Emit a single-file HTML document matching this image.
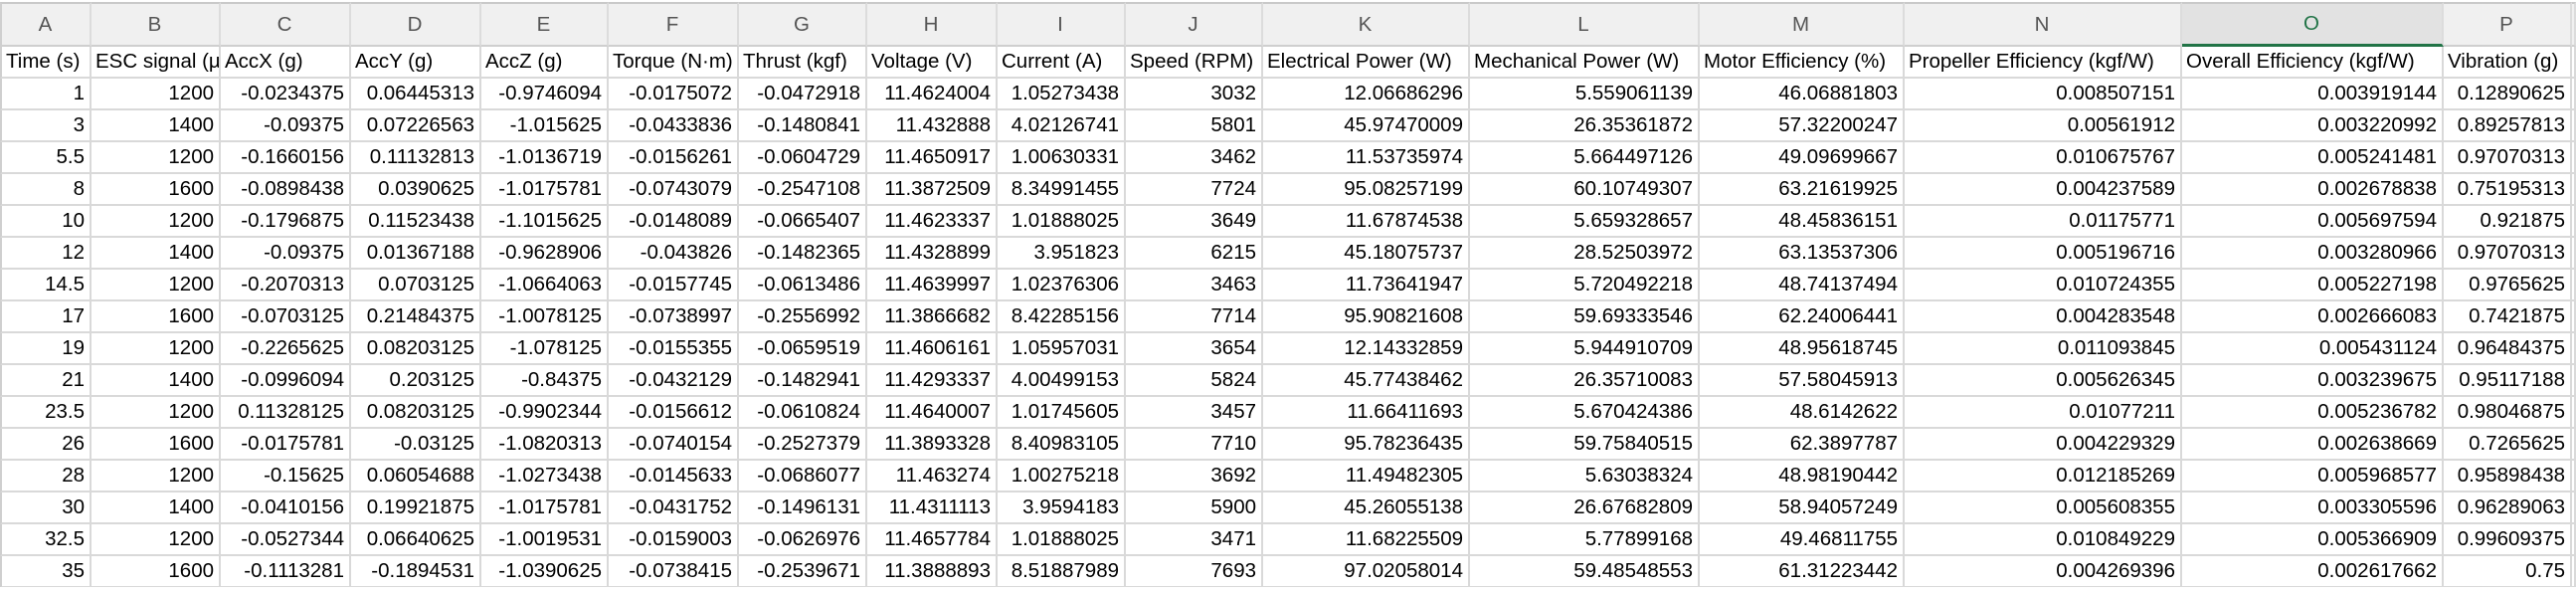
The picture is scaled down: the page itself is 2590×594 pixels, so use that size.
<!DOCTYPE html>
<html><head><meta charset="utf-8"><style>
html,body{margin:0;padding:0;background:#fff;width:2590px;height:594px;overflow:hidden}
#wrap{position:relative;width:2590px;height:594px;overflow:hidden}
table{position:absolute;left:0;top:2px;border-collapse:separate;border-spacing:0;table-layout:fixed;width:2590px;font-family:"Liberation Sans",sans-serif;font-size:20.5px;color:#000}
td{box-sizing:border-box;border-right:2px solid #d9d9d9;border-bottom:2px solid #d9d9d9;height:32px;padding:0 5px 0 4px;white-space:nowrap;overflow:hidden;text-align:right;line-height:30px}
tr.h td{background:#f0f0f0;color:#555;text-align:center;height:45px;border-top:2px solid #c9c9c9;border-right:2px solid #dcdcdc;border-bottom:2px solid #cfcfcf}
tr.h td.sel{background:#e2e2e2;color:#217346;border-bottom:3px solid #217346}
tr.t td{text-align:left;text-overflow:clip}
td:first-child{border-left:2px solid #cfcfcf}
</style></head><body><div id="wrap">
<table>
<colgroup><col style="width:92px"><col style="width:130px"><col style="width:131px"><col style="width:131px"><col style="width:128px"><col style="width:131px"><col style="width:129px"><col style="width:131px"><col style="width:129px"><col style="width:138px"><col style="width:208px"><col style="width:231px"><col style="width:206px"><col style="width:279px"><col style="width:263px"><col style="width:129px"><col style="width:4px"></colgroup>
<tr class="h"><td>A</td><td>B</td><td>C</td><td>D</td><td>E</td><td>F</td><td>G</td><td>H</td><td>I</td><td>J</td><td>K</td><td>L</td><td>M</td><td>N</td><td class="sel">O</td><td>P</td><td></td></tr>
<tr class="t"><td>Time (s)</td><td>ESC signal (µs)</td><td>AccX (g)</td><td>AccY (g)</td><td>AccZ (g)</td><td>Torque (N·m)</td><td>Thrust (kgf)</td><td>Voltage (V)</td><td>Current (A)</td><td>Speed (RPM)</td><td>Electrical Power (W)</td><td>Mechanical Power (W)</td><td>Motor Efficiency (%)</td><td>Propeller Efficiency (kgf/W)</td><td>Overall Efficiency (kgf/W)</td><td>Vibration (g)</td><td></td></tr>
<tr><td>1</td><td>1200</td><td>-0.0234375</td><td>0.06445313</td><td>-0.9746094</td><td>-0.0175072</td><td>-0.0472918</td><td>11.4624004</td><td>1.05273438</td><td>3032</td><td>12.06686296</td><td>5.559061139</td><td>46.06881803</td><td>0.008507151</td><td>0.003919144</td><td>0.12890625</td><td></td></tr>
<tr><td>3</td><td>1400</td><td>-0.09375</td><td>0.07226563</td><td>-1.015625</td><td>-0.0433836</td><td>-0.1480841</td><td>11.432888</td><td>4.02126741</td><td>5801</td><td>45.97470009</td><td>26.35361872</td><td>57.32200247</td><td>0.00561912</td><td>0.003220992</td><td>0.89257813</td><td></td></tr>
<tr><td>5.5</td><td>1200</td><td>-0.1660156</td><td>0.11132813</td><td>-1.0136719</td><td>-0.0156261</td><td>-0.0604729</td><td>11.4650917</td><td>1.00630331</td><td>3462</td><td>11.53735974</td><td>5.664497126</td><td>49.09699667</td><td>0.010675767</td><td>0.005241481</td><td>0.97070313</td><td></td></tr>
<tr><td>8</td><td>1600</td><td>-0.0898438</td><td>0.0390625</td><td>-1.0175781</td><td>-0.0743079</td><td>-0.2547108</td><td>11.3872509</td><td>8.34991455</td><td>7724</td><td>95.08257199</td><td>60.10749307</td><td>63.21619925</td><td>0.004237589</td><td>0.002678838</td><td>0.75195313</td><td></td></tr>
<tr><td>10</td><td>1200</td><td>-0.1796875</td><td>0.11523438</td><td>-1.1015625</td><td>-0.0148089</td><td>-0.0665407</td><td>11.4623337</td><td>1.01888025</td><td>3649</td><td>11.67874538</td><td>5.659328657</td><td>48.45836151</td><td>0.01175771</td><td>0.005697594</td><td>0.921875</td><td></td></tr>
<tr><td>12</td><td>1400</td><td>-0.09375</td><td>0.01367188</td><td>-0.9628906</td><td>-0.043826</td><td>-0.1482365</td><td>11.4328899</td><td>3.951823</td><td>6215</td><td>45.18075737</td><td>28.52503972</td><td>63.13537306</td><td>0.005196716</td><td>0.003280966</td><td>0.97070313</td><td></td></tr>
<tr><td>14.5</td><td>1200</td><td>-0.2070313</td><td>0.0703125</td><td>-1.0664063</td><td>-0.0157745</td><td>-0.0613486</td><td>11.4639997</td><td>1.02376306</td><td>3463</td><td>11.73641947</td><td>5.720492218</td><td>48.74137494</td><td>0.010724355</td><td>0.005227198</td><td>0.9765625</td><td></td></tr>
<tr><td>17</td><td>1600</td><td>-0.0703125</td><td>0.21484375</td><td>-1.0078125</td><td>-0.0738997</td><td>-0.2556992</td><td>11.3866682</td><td>8.42285156</td><td>7714</td><td>95.90821608</td><td>59.69333546</td><td>62.24006441</td><td>0.004283548</td><td>0.002666083</td><td>0.7421875</td><td></td></tr>
<tr><td>19</td><td>1200</td><td>-0.2265625</td><td>0.08203125</td><td>-1.078125</td><td>-0.0155355</td><td>-0.0659519</td><td>11.4606161</td><td>1.05957031</td><td>3654</td><td>12.14332859</td><td>5.944910709</td><td>48.95618745</td><td>0.011093845</td><td>0.005431124</td><td>0.96484375</td><td></td></tr>
<tr><td>21</td><td>1400</td><td>-0.0996094</td><td>0.203125</td><td>-0.84375</td><td>-0.0432129</td><td>-0.1482941</td><td>11.4293337</td><td>4.00499153</td><td>5824</td><td>45.77438462</td><td>26.35710083</td><td>57.58045913</td><td>0.005626345</td><td>0.003239675</td><td>0.95117188</td><td></td></tr>
<tr><td>23.5</td><td>1200</td><td>0.11328125</td><td>0.08203125</td><td>-0.9902344</td><td>-0.0156612</td><td>-0.0610824</td><td>11.4640007</td><td>1.01745605</td><td>3457</td><td>11.66411693</td><td>5.670424386</td><td>48.6142622</td><td>0.01077211</td><td>0.005236782</td><td>0.98046875</td><td></td></tr>
<tr><td>26</td><td>1600</td><td>-0.0175781</td><td>-0.03125</td><td>-1.0820313</td><td>-0.0740154</td><td>-0.2527379</td><td>11.3893328</td><td>8.40983105</td><td>7710</td><td>95.78236435</td><td>59.75840515</td><td>62.3897787</td><td>0.004229329</td><td>0.002638669</td><td>0.7265625</td><td></td></tr>
<tr><td>28</td><td>1200</td><td>-0.15625</td><td>0.06054688</td><td>-1.0273438</td><td>-0.0145633</td><td>-0.0686077</td><td>11.463274</td><td>1.00275218</td><td>3692</td><td>11.49482305</td><td>5.63038324</td><td>48.98190442</td><td>0.012185269</td><td>0.005968577</td><td>0.95898438</td><td></td></tr>
<tr><td>30</td><td>1400</td><td>-0.0410156</td><td>0.19921875</td><td>-1.0175781</td><td>-0.0431752</td><td>-0.1496131</td><td>11.4311113</td><td>3.9594183</td><td>5900</td><td>45.26055138</td><td>26.67682809</td><td>58.94057249</td><td>0.005608355</td><td>0.003305596</td><td>0.96289063</td><td></td></tr>
<tr><td>32.5</td><td>1200</td><td>-0.0527344</td><td>0.06640625</td><td>-1.0019531</td><td>-0.0159003</td><td>-0.0626976</td><td>11.4657784</td><td>1.01888025</td><td>3471</td><td>11.68225509</td><td>5.77899168</td><td>49.46811755</td><td>0.010849229</td><td>0.005366909</td><td>0.99609375</td><td></td></tr>
<tr><td>35</td><td>1600</td><td>-0.1113281</td><td>-0.1894531</td><td>-1.0390625</td><td>-0.0738415</td><td>-0.2539671</td><td>11.3888893</td><td>8.51887989</td><td>7693</td><td>97.02058014</td><td>59.48548553</td><td>61.31223442</td><td>0.004269396</td><td>0.002617662</td><td>0.75</td><td></td></tr>
</table>
<div style="position:absolute;left:0;top:590px;width:2590px;height:4px;background:#fff"></div>
</div></body></html>
